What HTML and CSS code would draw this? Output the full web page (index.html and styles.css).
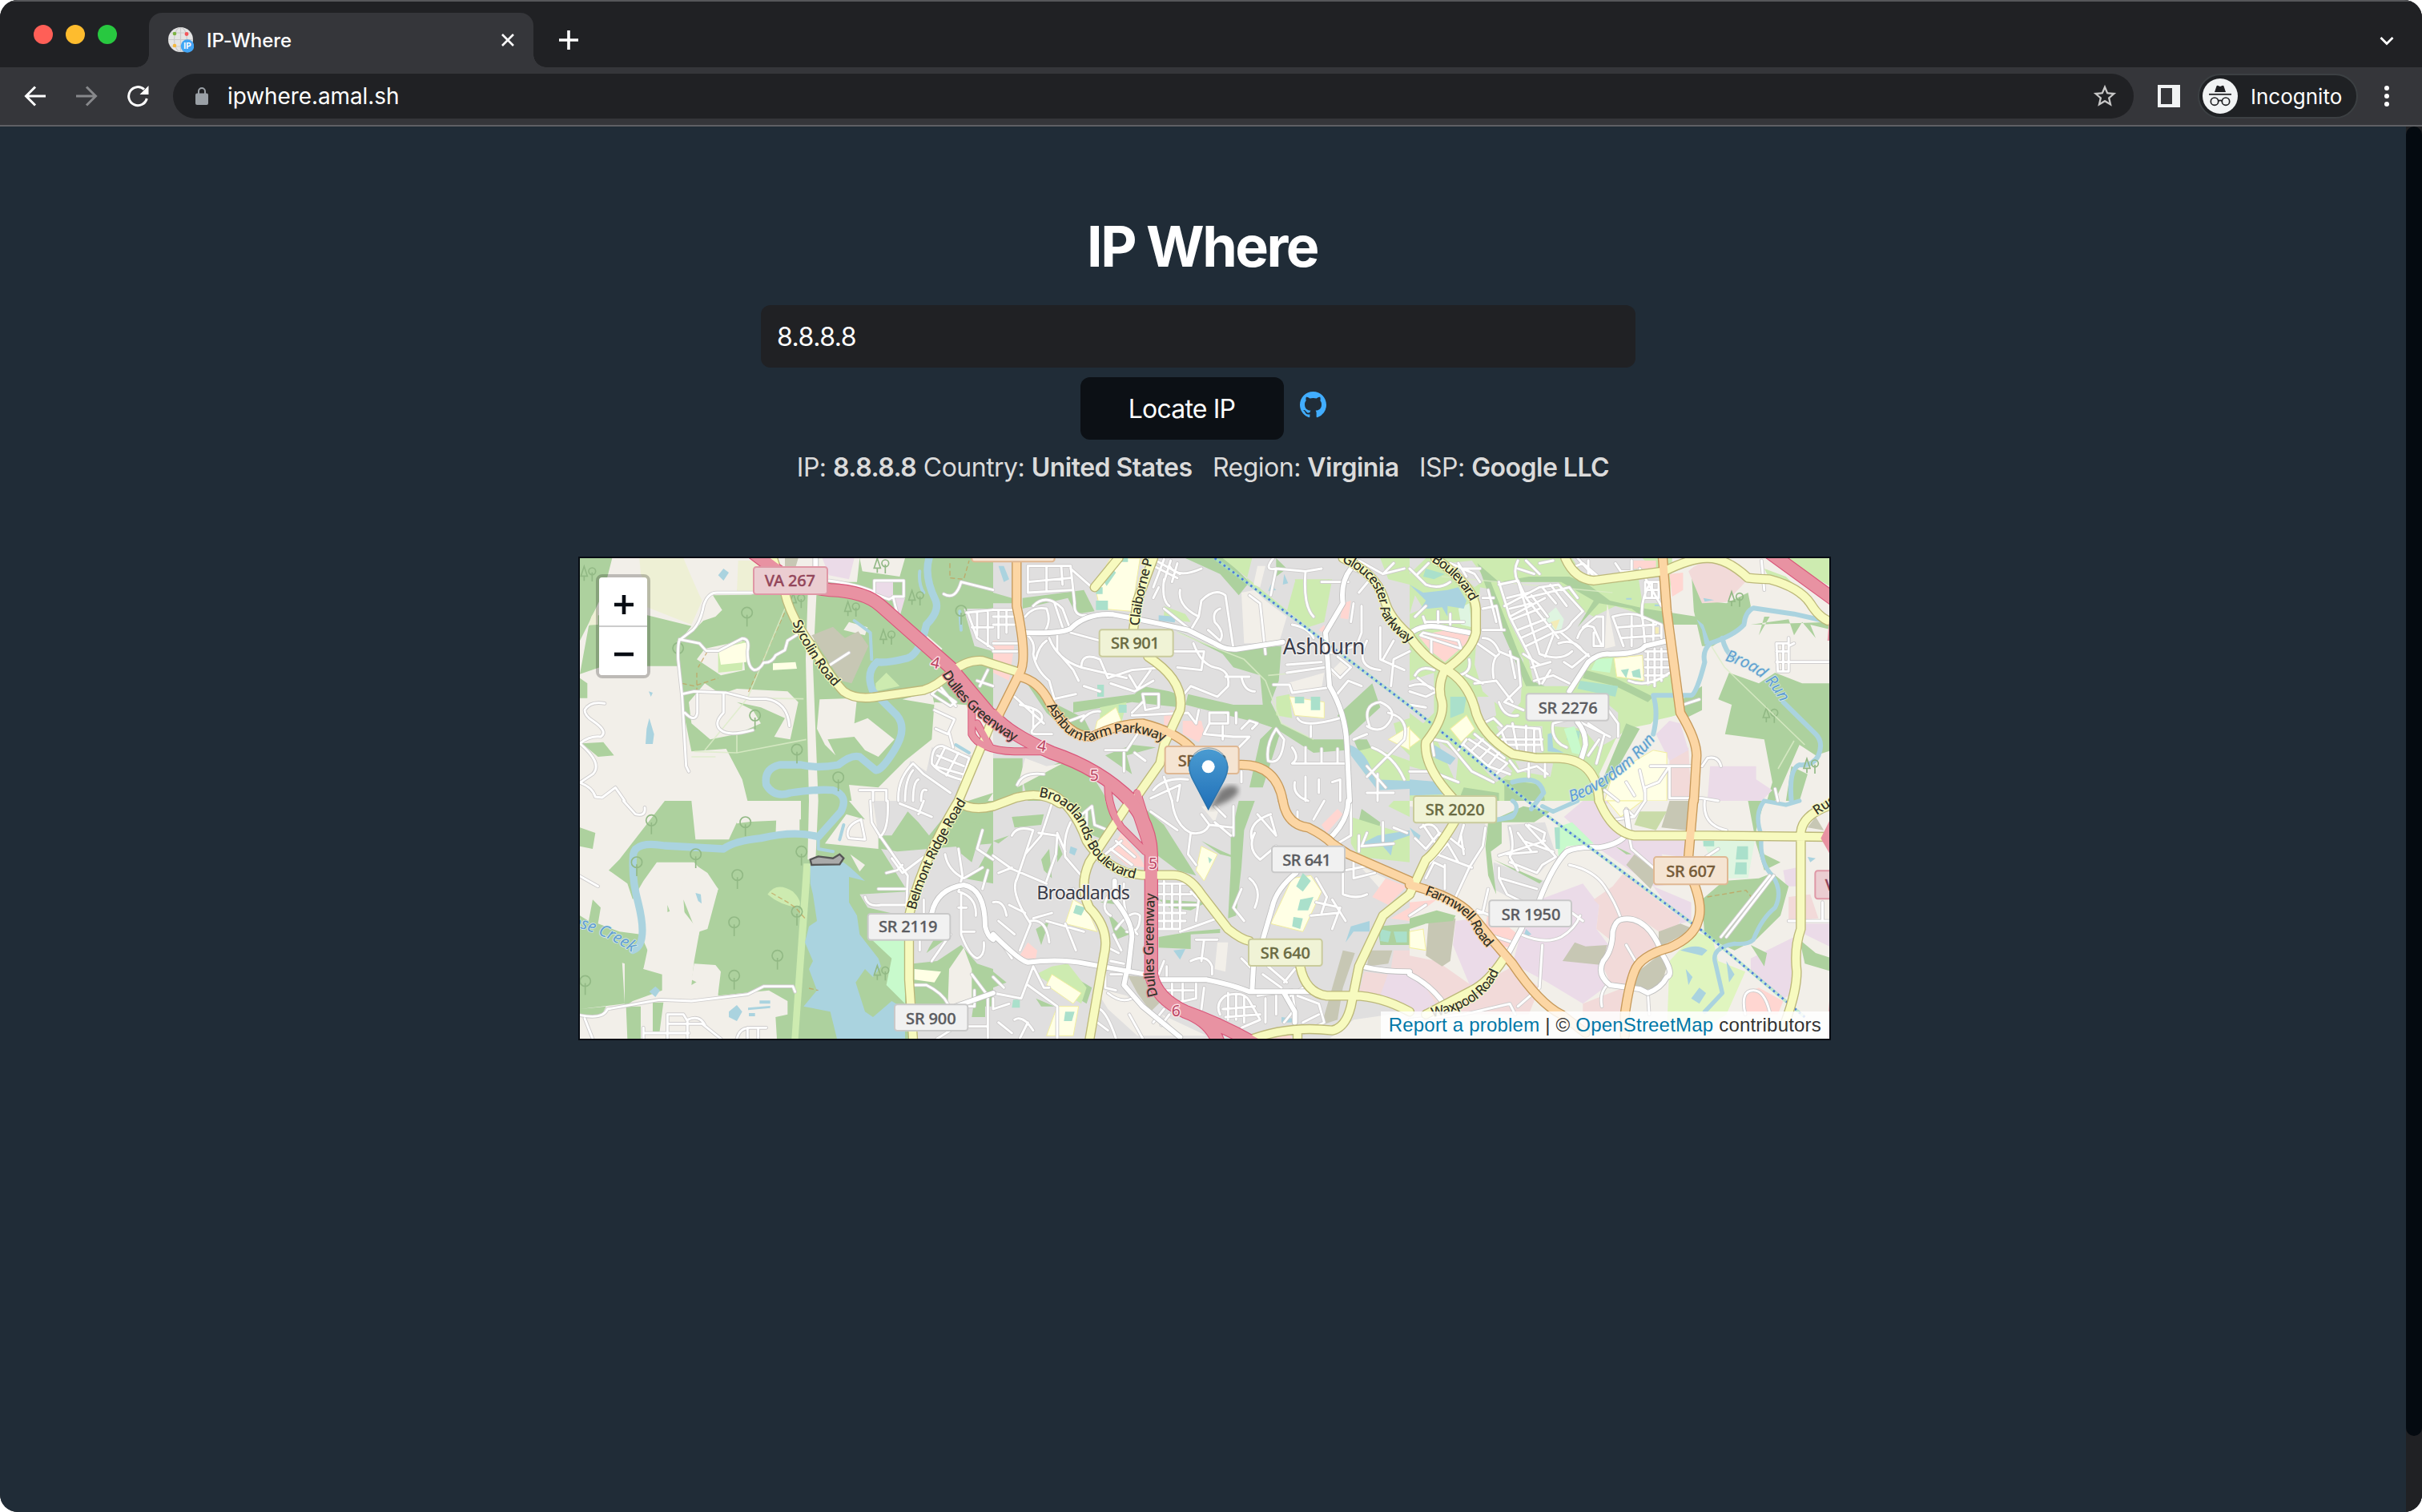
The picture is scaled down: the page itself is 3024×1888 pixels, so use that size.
FILE: index.html
```html
<!DOCTYPE html>
<html lang="en">
<head>
<meta charset="utf-8">
<title>IP-Where</title>
<link rel="stylesheet" href="styles.css">
</head>
<body>
<div class="window">
  <header class="tabstrip">
    <div class="lights"><i class="red"></i><i class="yellow"></i><i class="green"></i></div>
    <div class="tab">
      <svg class="favicon" viewBox="0 0 32 32"><circle cx="15.5" cy="15.5" r="15.5" fill="#e4e4e4"/><g fill="none" stroke="#c9c9c9" stroke-width="1.2"><path d="M15.500 0V31M0 15.500H31M3 7H28M3 24H28"/><ellipse cx="15.500" cy="15.500" rx="8" ry="15"/></g><circle cx="8" cy="8" r="2.300" fill="#7cb342"/><circle cx="23" cy="8.500" r="2.400" fill="#f4555a"/><circle cx="8" cy="23" r="2.300" fill="#f5b83d"/><circle cx="24" cy="23.500" r="8.300" fill="#42a5f5"/><text x="24" y="27" text-anchor="middle" class="favtext">IP</text></svg>
      <span class="tab-title">IP-Where</span>
      <svg class="close" viewBox="0 0 18 18"><path d="M2 2L16 16M16 2L2 16"/></svg>
    </div>
    <svg class="plus" viewBox="0 0 24 24"><path d="M12 0V24M0 12H24"/></svg>
    <svg class="chevron" viewBox="0 0 18 12"><path d="M1.500 2L9 9.500L16.500 2"/></svg>
  </header>
  <div class="toolbar">
    <svg class="nav" viewBox="0 0 28 28"><path d="M27 14H3M14 2.500L2.500 14L14 25.500"/></svg>
    <svg class="nav dim" viewBox="0 0 28 28"><path d="M1 14H25M14 2.500L25.500 14L14 25.500"/></svg>
    <svg class="nav" viewBox="0 0 28 28"><path d="M25.300 17A11.500 11.500 0 1 1 22 5.700"/><path class="solid" d="M27.500 1V12H16.500Z"/></svg>
    <div class="omnibox">
      <svg class="lock" viewBox="0 0 16 22"><rect y="7.500" width="16" height="14.500" rx="2" fill="#9aa0a6"/><path d="M4 8V5A4 4 0 0 1 12 5V8" fill="none" stroke="#9aa0a6" stroke-width="2"/></svg>
      <span class="url">ipwhere.amal.sh</span>
      <svg class="star" viewBox="0 0 24 24"><path d="M22 9.240l-7.190-.620L12 2 9.190 8.630 2 9.240l5.460 4.730L5.820 21 12 17.270 18.180 21l-1.630-7.030L22 9.240zM12 15.400l-3.760 2.270 1-4.280-3.320-2.880 4.380-.380L12 6.100l1.710 4.040 4.380.380-3.320 2.880 1 4.280L12 15.400z"/></svg>
    </div>
    <svg class="panel" viewBox="0 0 28 28"><path fill-rule="evenodd" d="M0 0H28V28H0ZM4 4V24H18V4Z"/></svg>
    <div class="incog">
      <svg viewBox="0 0 44 44"><circle cx="22" cy="22" r="22" fill="#f1f3f4"/><path d="M15 17L17.500 9.500Q18 8.500 19.500 9L22 10 24.500 9Q26 8.500 26.500 9.500L29 17Z" fill="#202124"/><path d="M8 19.800H36" stroke="#202124" stroke-width="1.800"/><g fill="none" stroke="#202124" stroke-width="1.700"><circle cx="15" cy="28.700" r="4.700"/><circle cx="29" cy="28.700" r="4.700"/><path d="M19.500 28.200Q22 26.700 24.500 28.200"/></g></svg>
      <span>Incognito</span>
    </div>
    <svg class="dots" viewBox="0 0 6 26"><circle cx="3" cy="3" r="3"/><circle cx="3" cy="13" r="3"/><circle cx="3" cy="23" r="3"/></svg>
  </div>
  <div class="viewport">
    <main>
      <h1>IP Where</h1>
      <div class="field">8.8.8.8</div>
      <div class="actions">
        <div class="btn">Locate IP</div>
        <svg class="github" viewBox="0 0 16 16"><path d="M8 0C3.580 0 0 3.580 0 8c0 3.540 2.290 6.530 5.470 7.590.4.070.55-.17.55-.38 0-.19-.01-.82-.01-1.490-2.010.37-2.530-.49-2.690-.94-.09-.23-.48-.94-.82-1.130-.28-.15-.68-.52-.01-.53.63-.01 1.080.58 1.230.82.72 1.210 1.870.87 2.330.66.07-.52.28-.87.51-1.070-1.780-.2-3.640-.89-3.640-3.950 0-.87.31-1.590.82-2.150-.08-.2-.36-1.020.08-2.120 0 0 .67-.21 2.200.82.640-.18 1.320-.27 2-.27s1.360.09 2 .27c1.530-1.040 2.200-.82 2.200-.82.440 1.100.160 1.920.080 2.120.510.560.820 1.270.820 2.150 0 3.070-1.870 3.750-3.650 3.950.290.250.540.730.540 1.480 0 1.070-.01 1.930-.01 2.200 0 .210.150.460.550.380A8.010 8.010 0 0 0 16 8c0-4.420-3.580-8-8-8z"/></svg>
      </div>
      <p class="info">IP: <b>8.8.8.8</b> Country: <b>United States</b> &nbsp; Region: <b>Virginia</b> &nbsp; ISP: <b>Google LLC</b></p>
      <div class="map">
        <svg class="canvas" viewBox="12 21 4680 1800" preserveAspectRatio="none">
          <defs>
            <g id="tree"><circle r="20"/><path d="M0 8V52"/></g>
            <g id="trees"><circle cx="16" cy="0" r="13"/><path d="M16 4V38M-14 -18L-26 18H-2ZM-14 18V36"/></g>
            <g id="minor">
              <!-- west, upper -->
              <path d="M665 150H525Q490 150 475 200 465 260 435 290L385 328Q378 345 380 400L395 540 410 800 420 820M385 325L460 340 485 368H530L620 322Q650 320 640 370 640 430 665 440 685 440 700 412 730 415 745 385L780 365 790 330 830 305M395 530L440 520 560 525 650 548H710Q790 560 797 650M452 530V600Q445 640 405 600M550 525V600Q510 640 540 665 570 690 660 665M105 565Q50 555 30 590 30 610 60 630 120 670 90 690 50 685 12 715M12 715Q100 790 60 830L12 862Q60 880 70 915L95 918 145 880 180 930M945 105Q1050 120 1110 145M1115 105H1225V165H1185L1200 225M1115 105V155L1170 175 1190 165M1375 155Q1420 180 1440 110L1560 140M950 420L1020 375"/>
              <path d="M1330 530L1400 575 1420 560 1350 510ZM1360 500L1420 575M1460 225L1560 215M1465 225L1500 320 1560 360M1480 280H1560M1500 225V310M1540 225V350M1500 480L1560 500M1540 440L1510 500M1340 590L1415 625 1390 680 1345 660M1395 675L1410 730M1330 790Q1330 720 1370 725L1470 770 1420 930M1330 790Q1360 830 1440 850M1380 730L1345 800M1430 750L1385 835M1350 760L1450 800M1340 800L1445 830M1205 930Q1200 850 1260 790L1300 830 1400 900M1230 930Q1230 850 1260 815M1260 930Q1260 860 1280 850M1290 930Q1290 880 1310 890M1060 890H1160V930M1110 890V930"/>
              <!-- west, lower -->
              <path d="M175 930L220 980Q260 990 255 955M12 1212L80 1250M12 1733Q100 1750 115 1710L310 1675 430 1680 640 1655 700 1625H810L818 1645M30 1745L60 1821M340 1821V1730H400L415 1755V1821M340 1765H470L540 1821M415 1750Q460 1730 480 1770M250 1800H420M250 1780V1821M600 1821Q610 1780 650 1780H710M640 1780V1821M680 1780V1821M1015 1060Q1010 1020 1065 1000L1080 1075 1020 1070ZM1100 930L1105 1010 1135 1060 1240 1210 1235 1330M1135 1065Q1170 1040 1165 930M1180 1145L1220 1200 1300 1140M1160 1200L1200 1190 1220 1170M1130 1260H1230M1080 1290Q1090 1330 1140 1320L1230 1320M1210 940L1260 960 1330 990M1280 980L1300 930M1380 1130Q1390 1190 1450 1220L1520 1180M1430 1110L1445 1210 1430 1270Q1500 1290 1495 1360M1520 1040L1500 1110 1560 1150M1540 1190L1520 1260M1440 1280V1430Q1470 1510 1500 1520 1530 1510 1525 1460M1430 1330H1460M1440 1420H1490M1285 1450V1490M1330 1530L1400 1430M1300 1300V1350M1265 1620H1310Q1370 1650 1390 1690M1480 1580L1540 1660V1821M1490 1640V1700L1420 1700M1470 1775H1540M1350 1821L1400 1790"/>
              <!-- centre, upper -->
              <g transform="translate(1560 0)"><path d="M130 50H290L305 190Q300 240 350 235M130 50V150M200 50V140M255 50L260 120M130 110L290 95M130 150L300 140M290 60L370 130M0 215H70M0 240H75M0 270H80M20 215V320M50 215V300M0 340H100M0 370H90M120 240Q150 200 200 210 220 260 190 300M150 200Q200 150 260 210L290 290M230 190L260 280M130 310Q160 340 150 380 160 440 210 480L230 550M210 320Q240 400 330 430L500 470M200 330Q170 350 160 400M290 300L400 330M240 300V370L300 440 320 480M330 430Q330 370 400 400L430 470 520 440 640 430M340 500L400 520M510 460L540 510 590 440M440 490L530 520 600 480M640 430Q600 410 610 400M680 370L790 370 780 440 690 430M750 340Q780 420 830 430 890 440 880 500L840 540 740 500 715 530M870 465H960M930 465Q940 520 980 520M660 50Q690 100 780 60M580 40L690 95M610 30L700 80M640 25L600 130M665 30L640 110M690 40L670 110M620 130L600 170M640 100Q630 180 660 200M700 140Q690 200 770 240L740 290 640 210M780 180Q830 130 870 160L900 360M780 180L770 240M805 290L850 330Q870 300 830 260 820 220 850 210M960 160L1000 190 1020 380M1120 270Q1180 280 1200 320M1050 20Q1010 70 1060 60L1170 70 1230 60M1060 60L1040 160M1170 70Q1160 200 1200 240M1230 110H1330M1340 60L1420 90 1370 150M1370 30L1460 80 1540 60M1460 80L1500 40M1350 190L1340 260M1380 200V300L1360 350 1250 380M1450 280V400L1540 440M1400 330Q1350 430 1450 440M1500 330L1460 400M1560 370L1500 400 1490 500M1100 450L1240 430M1100 420L1230 410M1050 495H1110L1120 525 1260 505M1290 390L1340 430 1300 470 1260 430M1280 540L1330 480 1380 500M1410 650Q1380 570 1450 560 1520 590 1480 640 1450 680 1400 650M1480 600Q1560 620 1540 700L1400 840M1140 620Q1160 660 1300 620M1190 650V690M1400 680L1350 700M1420 730Q1500 760 1540 850M1400 800L1470 880M1120 730Q1150 770 1120 790H1320M1170 730V790M1230 735V790M1290 735V790M1060 660Q1020 720 1030 780 1080 800 1090 700ZM810 600H880V640H810ZM910 600V640M930 660L960 630 990 640 970 660M810 640L790 680 900 690 960 690 910 740M860 650V700M560 530H620V580L570 590ZM520 600L560 560M520 610L730 600 760 640M770 590L760 640M420 740H500L540 680M490 750V820M530 750L570 780M100 570Q200 590 180 630 120 680 160 680L220 680M80 540L190 640M150 590V660M220 550L310 530M330 630Q360 590 400 595M260 640L340 610M90 870Q110 820 190 830M600 890Q640 840 730 850M640 840L670 930M590 920L700 870 690 930M930 820V860M1130 860Q1120 910 1180 930M1170 840V930M1220 850V900M1270 860L1300 850V930M1440 830V930M1400 900L1500 900"/></g>
              <!-- centre, lower -->
              <g transform="translate(1560 930)"><path d="M0 205L70 255 200 310M150 110L120 200 90 290Q60 340 140 460L100 560M150 110Q90 90 70 130M220 10L180 130 120 200M170 120L240 130 235 200 200 300M240 120L270 190M20 270L70 250M0 380Q40 370 50 430M60 390L120 420M140 450Q200 440 210 530M270 460L310 560M200 450L340 490M80 500L20 450M30 530L70 590M150 440L220 420M290 80Q260 140 270 210L330 280M300 330L260 340M310 70L370 20 380 90 430 110M350 120V40M670 0Q680 90 740 120 790 130 810 90L780 50M590 40L690 110M830 80L890 130M810 90L900 100M740 120L730 200 760 240M640 300V480M670 310V480M700 310V480M620 310H730M620 350H740M620 390H760M620 420H720M620 450H720M620 480H700M740 340L770 370 760 450M700 490L840 440M460 150L530 210M440 180L520 240M480 150L420 200M490 310Q480 430 540 500M450 330Q390 400 440 430M460 480Q520 400 550 430 550 500 500 490M970 150Q950 80 1040 50M980 120Q950 180 1000 220L1060 170M990 50L1060 130 1040 60M1140 40V100M1240 0L1200 70M1340 0V130L1290 160M1370 130V190M1400 120L1380 170 1500 160M1460 80V150M1550 120L1500 100M900 20V130M830 20L870 60M930 330L900 400 940 450M960 290Q1010 330 980 400M1310 270V350Q1360 370 1400 350M1320 260L1420 240M1350 220V290L1430 270M1210 290L1250 360 1230 420M1210 380L1300 400 1270 480M1190 430L1290 420M1270 370L1320 450M760 520H840M790 520L780 600M740 600Q800 570 820 620V650M640 600L620 650M650 620V670M670 670V760L760 740V680M710 680V750M650 710H750M780 780L790 700M850 800Q830 760 870 730 940 710 960 750L1000 820 930 850M880 720V820M910 730V820M940 730V830M860 780L980 770M870 810L1000 800M990 730L1120 710 1130 780 1090 830M1020 740V830M1060 720V800M1100 740L1160 700M1140 730L1220 760 1240 830 1160 870M1160 830L1220 800M1010 650L1080 700M1030 620L1100 680M1130 630L1090 680M930 590L970 630M0 660L40 700M0 720L105 740 150 620M150 620L190 700 210 700M130 690L240 770V890M0 740V780L60 760M420 640V700L460 710M490 690L530 730M440 650H490M440 600L490 610M430 720Q480 760 520 740M450 500L480 560M430 550L470 570M20 830L70 870M80 820Q110 800 150 860M100 890L130 830M400 780Q430 800 460 890M390 830L430 860M510 800L560 890M600 830L640 780M630 840L660 800"/></g>
              <!-- east, upper -->
              <g transform="translate(3120 0) scale(1.014 1)"><path d="M330 110L370 240 450 400 480 490M330 120L400 105 480 380M370 240L500 170M350 200L480 130 550 120 640 220M400 105L430 170 550 320M430 170L590 130 620 170M450 160L510 240M490 130L540 190M520 120L580 200M360 170L440 150M370 210L450 190M380 250L480 210M400 290L500 250M410 320L520 270M430 350L530 300Q580 300 600 260L640 220M500 390L530 310M480 380Q560 410 600 370M420 380L480 420M550 340Q610 320 640 370M570 410L600 430 660 380M560 300L670 395M450 430L520 410M460 480L530 460 590 490M490 490L520 440M620 320Q640 260 680 280L710 350M690 240H715V350H680V300M640 280L690 240M750 240Q820 220 860 240L930 270V320M750 240L790 350M770 280L910 270M780 320L930 310M820 240V350M860 240L870 350M900 260V330M860 250Q850 180 890 110M870 110H920V170H870ZM895 110V170M870 140H920M850 60L930 200M760 40L780 70H840M820 30V80M870 370L960 370M870 400H960M870 430H960M870 460L950 460M880 370V490M905 360V500M930 360V480M810 480Q880 510 960 450M400 30Q380 70 400 110M400 60L460 80M430 30L480 80M480 40L530 30M590 60L640 40 720 110M620 20L690 100M660 30V110M270 210L320 200 340 290 270 290M290 140L320 260M270 170H310M310 290H350M270 320Q310 320 330 370L400 400 410 500 350 560 420 590M330 380Q300 400 310 470M370 370L390 470M240 490L320 480 380 560M330 560Q350 620 400 610M220 400Q230 450 180 460M210 460L270 490M250 340L320 390M0 60L60 120Q110 140 150 110M30 80L70 40M90 30L140 60M150 40L240 80 260 110M180 40L210 90M200 60L260 60M20 240L60 200M50 240L60 270M105 220V270M150 230V270M60 260H200M40 310L190 360 180 330 50 300ZM80 330V380M20 460Q40 420 90 440M30 470L80 510M0 520L60 540 100 520M0 570L60 580M0 500Q60 480 100 520M270 640L310 620 340 650M310 700L360 650 480 660 490 740M340 670L370 750M380 640L400 750M430 650V750M460 660V750M340 700H490M320 720H480M200 720L290 800 370 830M220 700L360 790M240 680L350 770M210 700L180 740M230 740L270 700M260 770L300 730M290 800L330 750M320 830L360 790M90 700L140 710 230 820 310 860M0 820H80L180 860M80 700L90 760M370 780L400 820 470 800 510 830M440 790V840M500 790V840M530 640Q520 690 560 720L580 730M530 640L600 620 740 690M720 570L770 640V690M700 700L660 760M660 640L720 680 690 790M960 800H1080L1100 770Q1140 760 1150 800M960 800V920H1080L1140 930M870 930V880L920 860 960 800M850 815L870 900M890 800L960 800M720 890L770 930M800 860L830 910M1355 340H1400V445H1360ZM1355 370H1400M1355 410H1560M1380 340V445M1400 320V350L1420 340M1300 30L1310 140M1350 885L1360 930M1010 570L1070 550"/></g>
              <!-- east, lower -->
              <g transform="translate(3120 930) scale(1.014 1)"><path d="M20 140L60 180 110 120 150 140 200 180M50 90L110 180M60 250L140 160 180 230M40 100Q100 60 120 160M60 290L90 230 130 250M130 240V330M100 200L230 250M190 130L200 200M280 100L270 170 220 250 170 360M200 90L180 160M370 100Q390 170 370 210L400 260M360 200L470 190M330 205L500 150M430 90L540 210 490 240 470 270 370 230M400 120L450 190M440 90L500 120 490 160M420 150L530 190M330 250V290L360 350 420 380M335 290L470 330M290 330L270 420 230 420M0 430L60 390M250 410L300 430M590 240Q680 260 720 320 760 380 780 440M800 540L840 610M290 500L380 530M410 500Q500 540 560 510 610 480 630 430M600 420L640 450M490 540L480 700 400 770M0 820L200 800 370 760 390 800M730 690Q700 720 710 770M880 720L885 800M1090 0Q1080 90 1170 110M810 130L820 180 900 250M800 30L830 60 870 0M760 70L830 60M1095 210L1140 180M1240 800Q1220 710 1270 710 1310 710 1330 790M1400 450H1560M1525 380V450M1150 510L1330 280M1170 510L1345 280"/></g>
            </g>
            <g id="tert">
              <path d="M1330 1350Q1350 1260 1450 1245 1530 1260 1530 1400 1540 1440 1560 1450M1420 1700L1560 1650M895 21V100"/>
              <g transform="translate(1560 0)"><path d="M120 300Q250 305 290 285 350 225 450 232 600 260 730 290L830 340Q870 365 910 362L1085 335M1340 60Q1300 110 1310 190L1245 300 1260 500Q1320 600 1325 720L1335 930"/></g>
              <g transform="translate(1560 930)"><path d="M0 500Q100 600 130 605 250 590 350 610L570 650M620 670H800Q900 690 960 715H1200M500 640L490 690 560 770 700 885M455 300V370Q520 450 520 510L505 640M1330 0Q1330 80 1250 150M1135 270Q1060 330 1045 400L1010 520 975 620 970 710M1090 720 1130 790V830M1380 620Q1460 640 1560 640"/></g>
              <g transform="translate(3120 0) scale(1.014 1)"><path d="M0 305Q50 260 140 285L220 300M590 520L660 410Q700 375 740 380 850 380 870 350L955 330M620 635Q650 670 650 720L635 770"/></g>
              <g transform="translate(3120 930) scale(1.014 1)"><path d="M480 370Q530 240 580 190 620 170 700 175 790 160 810 110L800 40M415 475L355 590M0 650Q80 690 130 765M780 445Q840 430 890 490 920 530 930 570 980 650 950 660 930 700 880 720L850 705 740 690Q690 650 715 600 750 560 750 490 760 450 780 445"/></g>
            </g>
            <g id="sec">
              <path d="M735 21L780 150Q800 240 880 350 960 480 1000 520 1040 550 1110 542L1300 515Q1350 500 1400 450 1460 400 1520 405L1660 450M1560 620L1430 930M1430 930Q1290 1160 1245 1360V1600L1260 1821M1430 935Q1480 970 1560 950L1640 920Q1740 890 1810 940"/>
              <g transform="translate(1560 0)"><path d="M600 21L540 180 525 290M580 390Q720 480 700 590L640 720 625 790 520 940M1310 21Q1440 80 1470 190 1490 250 1560 310M470 20L380 130"/></g>
              <g transform="translate(1560 930)"><path d="M210 -30Q300 10 350 150 400 230 500 270L560 278H670Q730 275 780 350L880 480Q930 520 960 525M520 -10L360 230Q320 320 360 400 440 480 415 580L360 900M1150 620Q1170 720 1250 730H1350Q1450 730 1560 790M1560 350L1460 430 1370 620 1340 770Q1320 850 1270 860 1100 840 950 900M1140 860V890"/></g>
              <g transform="translate(3120 0) scale(1.014 1)"><path d="M95 21Q240 130 245 210V300Q230 370 130 440 100 500 120 560 130 620 60 710 50 800 160 920M0 315Q60 400 130 435 210 480 240 580 260 680 380 755L470 770H540Q690 770 700 930M575 21Q610 100 680 105L940 70Q1040 20 1100 21 1170 20 1250 95 1300 100 1330 100 1440 130 1480 190 1510 240 1545 255"/></g>
              <g transform="translate(3120 930) scale(1.014 1)"><path d="M165 80Q100 190 60 220L0 350M700 0Q750 120 830 130H1100L1550 135M1560 15Q1450 50 1445 120V480Q1420 550 1430 640 1430 720 1380 850M345 595Q290 680 230 710L60 800"/></g>
            </g>
            <g id="prim">
              <g transform="translate(1560 0)"><path d="M88 21V200Q130 400 100 450L5 640M100 465Q170 480 210 560 280 690 370 690 470 640 560 640 680 670 740 730M920 795Q1060 790 1085 930"/></g>
              <g transform="translate(1560 930)"><path d="M1085 0Q1100 90 1180 100 1240 130 1270 160L1330 200 1560 300"/></g>
              <g transform="translate(3120 0) scale(1.014 1)"><path d="M935 21L950 220 1000 600Q1060 700 1060 760L1050 930"/></g>
              <g transform="translate(3120 930) scale(1.014 1)"><path d="M1048 0L1030 210V260Q1090 390 1065 450 1050 510 960 550 850 580 830 640 810 690 795 800V880M0 315Q180 360 240 440 310 530 380 610 480 760 560 800L650 870"/></g>
            </g>
            <g id="mot">
              <path d="M660 0L740 60Q830 130 950 140 1080 145 1140 200L1400 430Q1500 550 1560 620"/>
              <g transform="translate(1560 0)"><path d="M0 610Q60 680 220 750 400 810 520 930"/></g>
              <g transform="translate(1560 930)"><path d="M460 -50Q590 60 592 200V650Q610 740 720 790 830 830 850 930M720 790Q860 840 980 910"/></g>
              <g transform="translate(3120 0) scale(1.014 1)"><path d="M1330 0L1580 185"/></g>
            </g>
            <g id="ramps"><path d="M1480 560V680Q1510 740 1640 745H1760M1500 640L1550 730M1990 870Q1990 960 2040 1030L2130 1120M2080 930L2150 1140M2100 900L2150 1060"/></g>
            <path id="p-syc" d="M808 262Q870 400 960 500"/>
            <path id="p-dul" d="M1368 455Q1450 600 1650 715"/>
            <path id="p-dul2" d="M2178 1660Q2150 1600 2168 1240"/>
            <path id="p-ash" d="M1760 575Q1840 720 1930 705 2080 640 2205 715"/>
            <path id="p-clai" d="M2108 275Q2110 200 2160 21"/>
            <path id="p-glo" d="M2865 35Q3010 100 3010 220 3040 290 3120 340"/>
            <path id="p-boul" d="M3200 32Q3310 100 3350 190"/>
            <path id="p-brd" d="M1730 915Q1850 930 1895 1050 1940 1190 2090 1222"/>
            <path id="p-bel" d="M1270 1340Q1312 1170 1462 930"/>
            <path id="p-farm" d="M3175 1280Q3310 1330 3350 1390 3370 1440 3420 1490"/>
            <path id="p-wax" d="M3205 1740Q3410 1700 3460 1555"/>
            <path id="p-beav" d="M3725 935Q3920 860 4045 695"/>
            <path id="p-broad" d="M4300 405Q4450 440 4515 570"/>
            <path id="p-goose" d="M-20 1398Q110 1430 215 1503"/>
            <path id="p-rus" d="M4645 985L4720 935"/>
            <linearGradient id="pin" x1="0" y1="0" x2="0" y2="1"><stop offset="0" stop-color="#4a9bd1"/><stop offset="1" stop-color="#1f6fb8"/></linearGradient>
            <filter id="soft"><feGaussianBlur stdDeviation="9"/></filter>
          </defs>
          <rect x="0" y="0" width="4720" height="1860" fill="#f2efe9"/>
          <!-- woodland and parks -->
          <g class="wood">
            <path d="M12 21H133L100 150 45 265 12 330ZM45 275L80 235H265L430 275 375 345 380 425H100L12 455ZM12 470L40 490V545H12ZM20 715L100 710 140 760 80 765ZM12 160L30 170V200H12Z"/>
            <path d="M510 160L660 158 600 140 640 115 700 150 770 60 H900L940 110 1050 110 1060 21H1560V930H640L620 850 560 735 430 745 405 620 395 545 380 340 440 290 475 255 520 240 545 215Z"/>
            <path d="M330 930H430L445 1075H570L600 1010 840 1000V930H1560V1821H750L745 1740 790 1730V1680L720 1640 530 1660V1560L430 1620 440 1530 460 1420 490 1410 530 1260 440 1160 300 1160 250 1230 210 1300 190 1240 120 1190 160 1150ZM12 1030L70 1050 60 1110 12 1100ZM45 1380L60 1300 90 1330 80 1390 160 1420 240 1430 270 1500 250 1560 320 1580V1640L210 1680 180 1700V1540L12 1480V1360ZM12 1480L170 1530 180 1690 12 1710ZM12 1710L110 1700 90 1740 12 1735ZM185 1700H240V1821H190ZM285 1685H325L310 1800H285ZM340 1320L380 1430 340 1460ZM400 1300L440 1400 410 1430Z"/>
          </g>
          <g fill="#f2efe9">
            <path d="M870 21H905L885 420 905 930H870L858 400ZM1060 21H1230L1210 90 1070 70ZM910 550L1050 545 1040 640 1090 620 1190 700 1130 765 1080 740 1040 690 940 700 970 760 930 720 900 660ZM480 490L540 530 600 510 790 520 830 560 800 700 740 690 780 620 690 580 600 560 660 590 690 640 600 680 500 700 430 640 420 560ZM430 760L560 740 600 820 560 930H430ZM770 21H860L850 50 760 60ZM1340 560L1560 580V930H1030L1020 870 1130 880 1230 780 1330 700ZM450 400L480 360 620 330 630 440 540 460ZM1020 260L1090 280 1080 310 1000 290ZM1300 300L1370 360 1350 380ZM1220 550L1330 520 1340 570ZM1080 1000L1010 980 930 1090 1130 1110V930H1020ZM750 935H835V1065H745ZM600 930H720L710 1000 600 1015ZM330 1350L280 1420 250 1560 420 1570 460 1420 390 1330ZM430 1160L490 1200 530 1260 480 1410 420 1330 390 1260ZM270 1220L330 1210 340 1240 270 1250ZM1025 1130L1080 1170 1060 1195ZM1395 1560L1450 1480 1480 1560V1700H1390ZM440 1540L520 1545 540 1570 530 1650 430 1600ZM870 930H905L895 1150H865Z"/>
          </g>
          <path d="M235 21H400Q450 140 470 180L430 270 265 205V130L240 80ZM55 240L80 200V270L45 272ZM605 30H720L690 150H600Z" fill="#eef0d5"/>
          <path d="M850 1165H878L830 1821H805Z" fill="#cdebb0"/>
          <path d="M715 1280Q750 1230 810 1270 850 1310 830 1330 760 1320 715 1280M1120 490L1160 450 1210 500 1120 520ZM530 360L630 330 620 440 530 450Z" fill="#cdebb0"/>
          <path d="M530 360L640 335 635 410 540 420ZM735 415L820 410 825 435 735 440ZM1265 1560L1365 1570 1340 1610 1265 1600Z" fill="#ffffe5"/>
          <path d="M880 310L960 278 1005 320 1055 295 1093 350 1030 490 990 480ZM780 21H830L820 55H780ZM1320 1120H1385L1360 1290 1290 1280Z" fill="#c7c7b4"/>
          <path d="M920 21H1040L1020 100 945 85ZM1115 110H1185V175H1120ZM1185 170H1230L1210 240Z" fill="#ebdbe8"/>
          <path d="M1105 1450H1230V1690L1160 1620 1180 1520Z" fill="#c8facc"/>
          <g class="resi"><path d="M1140 1110L1200 1120 1560 1090V1560L1500 1540 1440 1470 1350 1530 1260 1540V1370L1090 1330 1060 1280 1240 1270ZM1450 210H1560V370L1490 350ZM1330 730L1480 760 1430 930H1200L1250 780 1310 820ZM1260 1700H1560V1821H1260ZM1110 930H1420L1400 960 1320 1060 1280 1010 1240 970 1180 1060 1130 1060Z"/></g>
          <g class="wood"><path d="M1390 1030L1440 1000 1520 1020 1480 1160 1430 1120ZM1560 1080L1500 1190 1450 1220 1560 1240ZM1490 1670H1530V1740H1480ZM1540 930L1450 935 1560 900ZM1320 1480L1350 1430 1380 1450 1310 1500Z"/></g>
          <!-- centre land cover -->
          <g transform="translate(1560 0)">
            <path class="resi-fill" d="M0 21H1560V930H0Z"/>
            <path class="wood-fill" d="M0 150L70 170V190H0ZM110 170L340 140 380 220 310 230 280 170 110 210ZM680 290L850 365 1080 350 1070 480 1040 560 1080 640 1200 700 1330 700 1320 740 1200 750 1060 660 1000 640 720 570 730 530 900 570 1010 570 1000 460 900 430 860 380ZM300 560L530 530 560 500 660 520 720 540 700 580 520 560 300 600ZM720 21H870L960 110 920 160 850 80ZM1000 700L1050 650 1080 660 1010 880H960ZM0 770H110V930H0ZM110 850L260 780 380 850 430 930H130ZM120 480L200 550 340 620 380 700 300 690 200 600ZM1280 700L1400 700 1440 780 1400 820 1350 700ZM1060 21L1100 60 1060 90ZM1290 610L1420 490 1450 580 1330 690ZM420 760L520 720 610 730 500 760 520 830Z"/>
            <path class="park-fill" d="M860 21H970L950 100 1020 170 1100 220 1130 110 1270 100 1240 260 1180 280ZM1130 100H1260L1240 180 1140 170ZM1340 750L1420 730 1560 780V860H1450L1400 840ZM400 580L500 560 480 640 400 680ZM1060 540L1110 530 1120 620 1060 610ZM640 200L720 230 740 260 640 250ZM1450 21H1560V120L1480 100ZM1500 640L1560 620V760L1520 720Z"/>
            <path fill="#f2efe9" d="M930 150L980 140 1020 180 1100 240 1070 340 940 340ZM990 50L1020 50 1000 130 975 120ZM1100 490L1240 450 1230 510 1110 525ZM1260 450L1310 400 1330 430 1290 470ZM120 770L200 800 260 790 90 880Z"/>
            <path class="school" d="M440 21H550L520 220 400 210 380 120ZM390 630L460 580 480 630 380 670ZM1110 540L1240 560V620L1130 610ZM1480 700L1560 650V740Z"/>
            <path class="pitch" d="M460 21H505V35H460ZM410 100L440 55 460 75 425 125ZM385 180H430V215H385ZM390 495H415V540H390ZM1190 540H1225V590H1190ZM1130 540H1165V565H1130ZM470 570H500V600H470ZM385 130H410V155H385Z"/>
            <path fill="#ffd6d1" d="M0 330L80 340 60 480 0 450ZM710 630H780L790 670 770 710 710 680ZM640 610L670 590 690 630 640 650ZM1310 190L1340 180 1330 250 1300 245ZM1220 290L1240 270 1250 310Z"/>
            <path class="water-fill" d="M620 235L685 240 680 262 620 255ZM1335 720Q1400 740 1430 850L1560 855V885L1440 890 1340 760ZM1040 120L1060 140 1030 145ZM1090 80L1105 115 1085 120ZM20 50H40L60 100 40 110Z"/>
          </g>
          <g transform="translate(1560 930)">
            <path class="resi-fill" d="M0 0H1560V890H0Z"/>
            <path fill="#f2efe9" d="M380 700L500 730 700 880H540L430 780ZM1350 820L1560 790V890H1260ZM780 20L850 20 830 80ZM840 530L880 530 870 640 830 630ZM1370 240L1470 290 1450 330ZM340 20L420 60 380 120 330 80ZM630 800L800 880H700Z"/>
            <path class="wood-fill" d="M70 60L190 50 180 90 80 100ZM270 0H420L460 110 400 140 350 120 320 60ZM570 30L640 90 760 280 690 260 610 200ZM920 0H980L940 110 930 250 910 430 880 440 890 250 890 130ZM620 510L740 490 850 480V495L740 500V555L620 550ZM620 370L800 380 740 410 660 400ZM0 150L60 130 20 160ZM180 220L210 180 220 290 190 260ZM240 150L260 200 240 230ZM160 480L210 450 180 540ZM430 420L510 500 460 520ZM270 640L370 700 350 760 300 730 200 660ZM160 740L230 770H180ZM0 640L50 680 0 700ZM1380 30L1450 80 1440 150 1360 120ZM1440 470L1560 460V540L1450 540ZM780 150L860 190 930 220 850 200ZM400 380L440 370 480 390Z"/>
            <path class="park-fill" d="M1340 60L1560 130V230L1370 210 1340 160ZM220 620L280 610 350 700 330 760 160 650ZM1500 0H1560V60L1480 20Z"/>
            <path class="school" d="M780 170L840 200 790 300 760 260ZM1120 290L1190 280 1230 340 1160 490 1040 460ZM300 370L350 400 390 490 270 460ZM220 650L330 720 300 760 200 690ZM240 770H320L300 880H200Z"/>
            <path class="pitch" d="M1160 270L1190 300 1160 340 1135 320ZM1150 370L1200 360 1180 410H1140ZM1125 435L1160 440 1150 480 1120 470ZM310 390L345 400 330 430 300 420ZM270 790H305L295 825H265ZM1450 480L1490 490 1480 530 1450 525ZM1500 490H1550V530H1510ZM75 745H100V775H70ZM805 210L820 220 810 235Z"/>
            <path fill="#ffd6d1" d="M440 190L480 120 550 210 570 250 500 240ZM1230 90L1290 30 1310 50 1250 120ZM1420 360L1470 290 1550 320 1480 390ZM1490 440L1560 400V450ZM100 580L130 530 165 560 160 590 110 590ZM1040 880L1110 870 1120 890H1030Z"/>
            <path fill="#c7c7b4" d="M505 655L570 660 630 750 590 790 540 720ZM1310 560L1355 570 1310 700 1290 820 1230 840ZM1410 560H1495L1480 610 1400 620Z"/>
            <path fill="#f2dad9" d="M1390 640L1480 650 1450 730 1370 720ZM1500 560H1560V630H1490Z"/><path fill="#ebdbe8" d="M1480 645H1560V780L1450 730Z"/>
            <path class="water-fill" d="M1360 170L1440 130 1560 110V130L1500 150 1490 205 1460 170ZM1340 470L1410 450V490L1350 490 1320 530ZM675 560L720 555 700 595ZM290 170L315 180 305 205 285 195ZM1080 810L1120 815V830H1080Z"/>
          </g>
          <!-- east land cover -->
          <g transform="translate(3120 0) scale(1.014 1)">
            <path class="park-fill" d="M0 21H1030V600L900 630 800 760 700 930H0Z"/>
            <path class="resi-fill" d="M330 110L550 110 640 220 680 240 760 200 940 260 970 450 880 500 750 380 660 400 590 500 460 500 440 400 370 260ZM600 21H860L920 80 930 190 860 190 840 60 650 100ZM0 21H60L0 80ZM140 40L230 30 280 100 240 130ZM0 480L90 450 90 600 50 640 0 600ZM260 130L310 140 340 290 420 400 410 560 370 610 270 520 240 420ZM250 540L310 540 320 610 260 640ZM320 650L490 650V750L370 740ZM190 720L260 690 380 820 320 860ZM520 650L600 620 700 540 770 600 770 690 700 730 640 660ZM0 800L100 830 180 930 0 860ZM390 780L530 790 520 840 410 820ZM20 160L50 210 0 230ZM100 700L180 760 170 860Z"/>
            <path fill="#f2efe9" d="M970 21H1560V930H740L700 830 760 700 800 660 900 640 1010 600 960 200ZM730 190L760 350 720 360Z"/>
            <path class="wood-fill" d="M250 40L330 110 440 90 590 90 660 120 740 180 870 210 1060 240 1080 270 900 270 820 210 700 190 620 280 680 180 560 110 300 110 400 370 450 480 500 500 430 500 340 290ZM1040 60L1080 180 1170 190 1250 150 1260 200 1240 270 1120 350 1080 350 1050 220ZM1180 450L1290 490 1350 450 1450 490 1560 490V740L1500 760 1440 720 1350 930H1320L1340 860 1310 700 1165 680 1190 570 1140 550ZM1260 270L1560 260V290L1480 270 1500 320 1450 260 1420 310 1400 250ZM1330 240L1290 310 1310 240ZM990 560L1080 500V590L1020 620ZM650 440L760 470 900 540 880 560 760 500 640 470ZM800 640L850 660 700 930H680ZM350 850L490 870 500 930H350ZM200 880L330 900V930H180ZM1410 800L1470 830 1440 930H1390ZM1110 250L1150 330 1120 340Z"/>
            <path class="park-fill" d="M1370 21H1560V130ZM1310 60L1390 90 1440 140 1330 100Z"/>
            <path fill="#f2dad9" d="M1030 70Q1090 10 1170 50L1240 110 1170 185 1080 190ZM960 780L1030 730 1040 920H960Z"/>
            <path fill="#ffd6d1" d="M960 80L1010 75 1010 140 970 165ZM30 310L140 290 220 310 210 340 130 410 80 370ZM820 30H910V60H820Z"/>
            <path fill="#ebdbe8" d="M910 680L960 630 1000 640 1030 740 960 780ZM1110 800H1280V850L1340 890 1300 930H1100Z"/>
            <path class="school" d="M755 395L860 385 865 480 765 465ZM150 660L210 610 240 660 190 710ZM750 830L900 740 950 750 950 930H720ZM0 660L40 700 0 730Z"/>
            <path class="pitch" d="M780 440L810 435 800 470ZM820 445L850 435 855 470 825 465ZM630 480L770 500 760 540 620 510ZM590 660L630 670 620 730 580 700ZM60 60L130 80 90 100 50 90ZM150 540L210 540 200 600 150 620Z"/>
            <path fill="#c8facc" d="M690 400L750 395 740 450 670 440ZM570 660L610 650 640 760 600 750Z"/><path fill="#dff5e1" d="M500 240L540 205 570 250 560 290 520 290ZM180 210L220 190 230 280 190 270Z"/>
            <path class="water-fill" d="M0 120L50 150 140 140 180 130 210 180 200 210 140 200 140 240 120 205 70 210 40 210 60 180ZM90 720L170 770 150 795 95 770ZM0 850L120 860 140 905 0 910ZM510 680L525 675 530 730 570 750 510 745ZM800 170H820V176H800ZM905 194H935V201H905ZM1060 250L1085 270 1110 340 1090 345 1080 290ZM1085 170L1125 178 1090 184Z"/>
            <path fill="#f3ecb8" d="M520 260L555 250 540 290ZM900 280H920V310H900Z"/>
          </g>
          <g transform="translate(3120 930) scale(1.014 1)">
            <path fill="#f2efe9" d="M0 0H1560V890H0Z"/>
            <path class="resi-fill" d="M0 20L280 80 270 180 160 380 0 300ZM310 230L500 300 480 370 420 390 310 330ZM360 90L500 80 540 200 480 270 380 240Z"/>
            <path fill="#ebdbe8" d="M570 60L640 0H760L700 20 760 110 1020 150 1010 210 930 200 1000 310 900 320 700 180ZM170 450L240 440 350 600 230 710 160 540ZM480 370L640 310 700 390 690 480 750 560 720 600 720 700 640 760 510 680 380 610 410 500ZM0 640L110 740 90 800H0ZM900 320L1040 380V450L1000 460ZM1260 590L1420 510 1420 720 1380 740 1260 640ZM1460 460H1560V550L1460 500ZM1380 260L1430 250V320H1390Z"/>
            <path fill="#f2dad9" d="M750 320L790 270 1000 440 990 480 920 490 850 440 770 450 740 520 690 480 700 390 680 370ZM0 580L100 600 240 700 380 620 480 700 440 800H120L60 700 0 640ZM760 460L850 440 900 500 930 560 840 600 810 690 740 680 715 620ZM640 760L790 700 780 860H640ZM1400 360L1480 350 1510 440 1400 450Z"/>
            <path fill="#c7c7b4" d="M70 450L170 440 150 600 120 620 60 580ZM800 240L830 200 920 270 890 330ZM565 600L610 530 650 545 730 540 710 615ZM930 570L950 620 930 690 870 710 830 690 830 650ZM960 0H1040L1020 110 930 100ZM920 490L1000 460 1050 480 920 550ZM1470 100L1500 60 1530 110Z"/>
            <path class="wood-fill" d="M290 80L420 20 520 40 460 80 340 80 340 160 300 190 320 350 290 280 280 170ZM1080 370L1160 300 1290 290 1340 270 1400 320 1370 430 1280 520 1200 560 1090 510ZM1250 0H1310L1280 110 1310 200 1370 230 1310 260 1280 160ZM0 440L100 410 170 430 160 450 60 460 0 480ZM1440 520L1500 570 1560 590V640L1460 610ZM760 170L820 200 800 200ZM310 220L490 300 480 310ZM1260 540L1320 570 1310 620Z"/>
            <path fill="#e0f5bf" d="M960 600L1060 490 1120 520 1140 600 1240 640 1170 800 1060 870H950Z"/>
            <path fill="#c8facc" d="M540 100L600 80 680 160 580 170 550 210Z"/><path fill="#dff5e1" d="M1080 150H1275L1250 290 1150 290Z"/>
            <path class="pitch" d="M1085 150H1125V170H1085ZM1210 170H1250V220H1205ZM1205 230H1245V275H1200ZM535 100H555V180H540Z"/>
            <path fill="#ffd6d1" d="M0 380L100 370 60 400 0 430ZM290 410L400 500 380 550 270 540ZM1240 720L1290 700 1380 750 1360 800H1240Z"/>
            <path fill="#c9dba9" d="M850 40H950L910 110 830 90Z"/>
            <path class="school" d="M0 490L50 480 60 560 0 550ZM730 0H860L780 60Z"/>
            <path class="water-fill" d="M1000 560Q1060 530 1100 560L1080 580ZM1020 630L1045 660 1030 690ZM1070 700L1095 720 1070 760 1040 740ZM1170 600L1200 650 1180 680ZM430 480L450 500 420 510ZM340 60L390 40 380 70 320 80ZM0 100L40 130 30 160ZM1470 210L1500 215 1480 230Z"/>
          </g>
          <!-- reservoir and streams -->
          <path class="water-fill" d="M875 1168L1000 1160 1025 1180 1080 1230 1020 1215V1310L1050 1360 1060 1430 1130 1520 1140 1550 1110 1590 1080 1560 1045 1610 1080 1720 1110 1740 1180 1680 1230 1710V1821H975L950 1720 850 1700 900 1640 870 1560 885 1530 855 1460 870 1400 900 1380 885 1280 875 1240ZM570 1720L600 1695 620 1720 600 1755 570 1740ZM272 1645L295 1625 312 1640 295 1665ZM530 85L550 60 570 75 550 105ZM272 620L290 680 285 717H258L262 660ZM270 520L285 525 278 540ZM685 1678H725V1690H685ZM642 1705L725 1698V1706L642 1714ZM645 1725H668V1737H645ZM445 1275L465 1280 468 1315 455 1305Z"/>
          <g class="river">
            <path stroke-width="28" d="M1320 21Q1300 90 1345 180 1360 220 1310 270 1285 380 1240 395 1160 415 1125 410 1080 450 1110 520L1200 610Q1240 660 1190 740 1140 820 1120 815L1060 765Q1030 755 980 795 900 810 840 795H760Q700 810 710 870 740 920 800 900 900 885 960 890 1020 910 990 970L905 1065Q820 1040 690 1070 590 1080 550 1110L330 1098Q220 1080 212 1130 205 1220 230 1310 270 1470 210 1490"/>
            <path stroke-width="12" d="M1285 70Q1280 120 1300 150M1040 255L1100 300 1105 400M1435 220L1440 290M1420 720L1470 750M905 1070V1110L960 1120M1000 1020L985 1075"/>
            <g transform="translate(3120 0) scale(1.014 1)"><path stroke-width="18" d="M1550 260L1420 230 1270 208Q1240 220 1235 270 1200 310 1110 340 1080 370 1090 410 1060 530 1040 535H900Q920 600 900 680M1155 320Q1165 370 1200 400M1380 560L1500 680Q1530 710 1510 760 1490 800 1440 795 1400 810 1410 930M380 860Q480 830 495 900L450 960"/></g>
            <g transform="translate(3120 930) scale(1.014 1)"><path stroke-width="16" d="M1440 0L1390 15 1310 0Q1270 50 1300 130 1290 230 1340 280 1380 340 1350 400 1300 440 1270 520 1250 540 1200 535 1110 550 1130 610L1155 720 1090 790M380 0Q410 20 380 60L320 70M490 20L530 40 620 0"/></g>
          </g>
          <path d="M875 1150L905 1138 960 1145 985 1130 1000 1145 985 1168 880 1170Z" fill="#aaa" stroke="#555" stroke-width="7"/>
          <g class="treeicons">
            <use href="#tree" x="638" y="225"/><use href="#tree" x="825" y="738"/><use href="#tree" x="980" y="842"/><use href="#tree" x="668" y="610"/><use href="#tree" x="380" y="358"/><use href="#tree" x="842" y="1120"/><use href="#tree" x="602" y="1208"/><use href="#tree" x="590" y="1385"/><use href="#tree" x="752" y="1510"/><use href="#tree" x="590" y="1585"/><use href="#tree" x="446" y="1130"/><use href="#tree" x="280" y="1003"/><use href="#tree" x="32" y="1605"/><use href="#tree" x="225" y="1160"/><use href="#tree" x="825" y="1345"/><use href="#tree" x="632" y="1010"/><use href="#tree" x="1440" y="218"/>
            <use href="#trees" x="1270" y="160"/><use href="#trees" x="1030" y="202"/><use href="#trees" x="1163" y="307"/><use href="#trees" x="42" y="70"/><use href="#trees" x="1140" y="1565"/><use href="#trees" x="4470" y="600"/><use href="#trees" x="4622" y="790"/><use href="#trees" x="825" y="170"/><use href="#trees" x="1140" y="40"/><use href="#trees" x="4340" y="165"/>
          </g>
          <g class="tracks"><path d="M790 200L640 530M395 490L440 500 530 470M1398 40V95L1450 100 1470 30M450 450V520M490 370L455 430M730 1275L790 1310 820 1330 855 1370M870 1632L905 1640M4235 1290L4380 1265 4400 1290"/></g>
          <g class="paths"><path d="M440 745L600 750 860 700M430 765L520 765M480 740L640 545 780 210M600 670V750M640 545L850 548M2250 300L2500 400 2580 480 2640 640 2760 700M3240 90L3880 150M2590 460L2700 450M4560 705L4500 810M4250 350L4300 430 4600 720"/></g>
          <!-- roads -->
          <use href="#minor" class="road minor-c"/><use href="#minor" class="road minor-f"/>
          <use href="#tert" class="road tert-c"/><use href="#tert" class="road tert-f"/>
          <path d="M2390 21L3120 575 3560 930 4220 1420 4600 1740" stroke="#a9e5c4" stroke-width="12" fill="none" opacity=".7"/>
          <path d="M2390 21L3120 575 3560 930 4220 1420 4600 1740" stroke="#4d79dd" stroke-width="8" stroke-dasharray="8 13" fill="none"/>
          <use href="#sec" class="road sec-c"/><use href="#ramps" class="road ramp-c"/><use href="#mot" class="road mot-c"/><use href="#prim" class="road prim-c"/>
          <use href="#sec" class="road sec-f"/><use href="#prim" class="road prim-f"/><use href="#ramps" class="road ramp-f"/><use href="#mot" class="road mot-f"/>
          <path d="M4700 990L4660 1070 4700 1140Z M4692 250V330H4685Z M4692 1680V1820H4685Z" fill="#e892a2"/>
          <!-- names along roads -->
          <g class="rname">
            <text class="hy"><textPath href="#p-syc" textLength="290">Sycolin Road</textPath></text>
            <text class="hr"><textPath href="#p-dul" textLength="375">Dulles Greenway</textPath></text>
            <text class="hr"><textPath href="#p-dul2" textLength="385">Dulles Greenway</textPath></text>
            <text class="ho"><textPath href="#p-ash" textLength="505">Ashburn Farm Parkway</textPath></text>
            <text class="hy"><textPath href="#p-clai" textLength="255">Claiborne P</textPath></text>
            <text class="hy"><textPath href="#p-glo" textLength="415">Gloucester Parkway</textPath></text>
            <text class="hy"><textPath href="#p-boul" textLength="215">Boulevard</textPath></text>
            <text class="hy"><textPath href="#p-brd" textLength="500">Broadlands Boulevard</textPath></text>
            <text class="hy"><textPath href="#p-bel" textLength="450">Belmont Ridge Road</textPath></text>
            <text class="ho"><textPath href="#p-farm" textLength="320">Farmwell Road</textPath></text>
            <text class="hy"><textPath href="#p-wax" textLength="315">Waxpool Road</textPath></text>
            <text class="hy"><textPath href="#p-rus">Rus</textPath></text>
          </g>
          <g class="wname">
            <text><textPath href="#p-beav" textLength="400">Beaverdam Run</textPath></text>
            <text><textPath href="#p-broad" textLength="272">Broad Run</textPath></text>
            <text><textPath href="#p-goose" textLength="250">ose Creek</textPath></text>
          </g>
          <g class="exit"><text x="1327" y="432" transform="rotate(12 1340 410)">4</text><text x="1726" y="744" transform="rotate(10 1740 725)">4</text><text x="1922" y="854">5</text><text x="2142" y="1186">5</text><text x="2228" y="1737">6</text></g>
          <g class="place"><text class="town" x="2645" y="381" textLength="308">Ashburn</text><text x="1723" y="1299" textLength="350">Broadlands</text></g>
          <!-- route shields -->
          <g class="shield">
            <g class="s-red"><rect x="663" y="54" width="276" height="102" rx="10"/><text x="704" y="125" textLength="190">VA 267</text></g>
            <g class="s-yel"><rect x="1958" y="289" width="276" height="100" rx="10"/><text x="2001" y="361" textLength="182">SR 901</text></g>
            <g class="s-ora"><rect x="2204" y="726" width="276" height="102" rx="10"/><text x="2252" y="800" textLength="182">SR 643</text></g>
            <g class="s-ora"><rect x="1480" y="-60" width="310" height="94" rx="10"/></g>
            <g class="s-gry"><rect x="3557" y="529" width="308" height="100" rx="10"/><text x="3602" y="604" textLength="222">SR 2276</text></g>
            <g class="s-yel"><rect x="3135" y="912" width="310" height="100" rx="10"/><text x="3179" y="983" textLength="222">SR 2020</text></g>
            <g class="s-gry"><rect x="2604" y="1100" width="273" height="98" rx="10"/><text x="2644" y="1173" textLength="182">SR 641</text></g>
            <g class="s-gry"><rect x="1091" y="1353" width="308" height="98" rx="10"/><text x="1131" y="1422" textLength="220">SR 2119</text></g>
            <g class="s-gry"><rect x="1191" y="1693" width="274" height="98" rx="10"/><text x="1233" y="1767" textLength="188">SR 900</text></g>
            <g class="s-yel"><rect x="2517" y="1448" width="275" height="100" rx="10"/><text x="2561" y="1522" textLength="187">SR 640</text></g>
            <g class="s-ora"><rect x="4035" y="1140" width="276" height="103" rx="10"/><text x="4081" y="1216" textLength="185">SR 607</text></g>
            <g class="s-gry"><rect x="3418" y="1303" width="308" height="98" rx="10"/><text x="3464" y="1378" textLength="221">SR 1950</text></g>
            <g class="s-red"><rect x="4639" y="1192" width="200" height="105" rx="10"/><text x="4676" y="1265">VA</text></g>
          </g>
          <!-- location pin -->
          <path d="M2366 962L2410 890Q2450 862 2475 880 2490 905 2430 935Z" fill="#000" opacity=".45" filter="url(#soft)"/>
          <path d="M2366 966L2308 856Q2292 826 2292 803A75 75 0 0 1 2441 803Q2441 826 2426 856Z" fill="url(#pin)"/><path d="M2366 962L2311 856Q2295 826 2295 803A71 71 0 0 1 2438 803Q2438 826 2423 856Z" fill="none" stroke="#2e6c97" stroke-width="4" opacity=".5"/>
          <circle cx="2366" cy="802" r="24" fill="#fff"/>
        </svg>
        <div class="zoomctl">
          <div><svg viewBox="0 0 24 24"><path d="M12 0V24M0 12H24"/></svg></div>
          <div><svg viewBox="0 0 24 24"><path d="M0 12H24"/></svg></div>
        </div>
        <div class="attrib"><a>Report a problem</a> | © <a>OpenStreetMap</a> contributors</div>
      </div>
    </main>
    <div class="scroll"><div class="thumb"></div></div>
  </div>
</div>
</body>
</html>
```
FILE: styles.css
```css
* { box-sizing: border-box; }
body { margin: 0; background: #fff; font-family: Inter, "Liberation Sans", sans-serif; }
svg { display: block; flex: none; }
.window { width: 3024px; height: 1888px; border-radius: 22px; overflow: hidden; background: #202124; display: flex; flex-direction: column; }
.tabstrip { height: 84px; border-top: 2px solid #56575a; display: flex; align-items: flex-start; padding-left: 42px; background: #202124; }
.lights { display: flex; gap: 16px; padding-top: 29px; width: 144px; }
.lights i { width: 24px; height: 24px; border-radius: 50%; }
.red { background: #ff5f57; } .yellow { background: #febc2e; } .green { background: #28c840; }
.tab { position: relative; width: 480px; height: 68px; margin-top: 14px; background: #35363a; border-radius: 16px 16px 0 0; display: flex; align-items: center; padding: 0 23px 0 24px; color: #fff; }
.tab::before, .tab::after { content: ""; position: absolute; bottom: 0; width: 16px; height: 16px; }
.tab::before { left: -16px; background: radial-gradient(circle at 0 0, transparent 15.5px, #35363a 16px); }
.tab::after { right: -16px; background: radial-gradient(circle at 100% 0, transparent 15.5px, #35363a 16px); }
.favicon { width: 32px; height: 32px; }
.favtext { font: 700 10px Inter, sans-serif; fill: #fff; }
.tab-title { flex: 1; margin-left: 16px; font-size: 24px; font-weight: 500; letter-spacing: -.1px; }
.close { width: 18px; height: 18px; fill: none; stroke: #fff; stroke-width: 2.6; }
.plus { width: 24px; height: 24px; margin: 36px 0 0 32px; fill: none; stroke: #fff; stroke-width: 3.6; }
.chevron { width: 18px; height: 12px; margin: 43px 35px 0 auto; fill: none; stroke: #fff; stroke-width: 2.8; }
.toolbar { height: 74px; background: #35363a; border-bottom: 2px solid #5f6064; display: flex; align-items: center; padding: 0 41px 0 30px; }
.nav { width: 28px; height: 28px; margin-right: 36px; fill: none; stroke: #fff; stroke-width: 3; }
.nav.dim { stroke: #87888b; }
.nav .solid { fill: #fff; stroke: none; }
.omnibox { width: 2448px; height: 56px; margin-left: -6px; border-radius: 28px; background: #202124; display: flex; align-items: center; padding: 0 19px 0 28px; }
.lock { width: 16px; height: 22px; }
.url { flex: 1; margin-left: 24px; font-size: 28px; color: #fff; letter-spacing: -.1px; }
.star { width: 34px; height: 34px; fill: #c7c7c7; }
.panel { width: 28px; height: 28px; margin-left: 30px; fill: #f1f3f4; }
.incog { width: 200px; height: 56px; margin-left: 22px; border: 2px solid #3c4043; border-radius: 28px; background: #1f2124; display: flex; align-items: center; padding-left: 4px; color: #fff; font-size: 26px; }
.incog svg { width: 44px; height: 44px; }
.incog span { margin-left: 16px; }
.dots { width: 6px; height: 26px; margin-left: auto; fill: #fff; }
.viewport { flex: 1; display: flex; background: #202c37; }
main { flex: 1; display: flex; flex-direction: column; align-items: center; }
.scroll { width: 20px; background: #202124; }
.thumb { height: 1635px; border-radius: 10px; background: #040a10; }
h1 { margin: 106px 2px 0 0; height: 88px; line-height: 88px; font-size: 70px; font-weight: 650; letter-spacing: -2.5px; color: #fff; }
.field { width: 1092px; height: 78px; margin: 29px 12px 0 0; border-radius: 12px; background: #202124; color: #fff; font-size: 32px; line-height: 79px; padding-left: 20px; letter-spacing: -.5px; }
.actions { display: flex; gap: 20px; margin-top: 12px; }
.btn { width: 254px; height: 78px; border-radius: 12px; background: #0c1015; color: #fff; font-size: 32px; line-height: 79px; text-align: center; letter-spacing: -.8px; }
.github { width: 33px; height: 33px; margin-top: 18px; fill: #41adff; }
.info { margin: 15px 0 0; height: 40px; line-height: 40px; font-size: 32px; color: #dbdbdb; white-space: nowrap; letter-spacing: -.52px; }
.info b { font-weight: 600; }
.map { position: relative; width: 1564px; height: 604px; margin: 91px 0 0 4px; border: 2px solid #070c13; overflow: hidden; }
.canvas { width: 1560px; height: 600px; }
.wood path, .wood-fill { fill: #add19e; }
.park-fill { fill: #cdebb0; }
.resi path, .resi-fill { fill: #e0dfdf; }
.school { fill: #ffffe5; stroke: #f3efa0; stroke-width: 3; }
.pitch { fill: #aae0cb; }
.water-fill { fill: #aad3df; }
.river { fill: none; stroke: #aad3df; stroke-linecap: round; stroke-linejoin: round; }
.treeicons { fill: none; stroke: #92b985; stroke-width: 5; }
.tracks { fill: none; stroke: #c39a55; stroke-width: 4; stroke-dasharray: 18 10; opacity: .7; }
.paths { fill: none; stroke: #dcecc8; stroke-width: 5; opacity: .8; }
.road { fill: none; stroke-linejoin: round; stroke-linecap: round; }
.minor-c { stroke: #cfcdcd; stroke-width: 14; } .minor-f { stroke: #fff; stroke-width: 8.500; }
.tert-c { stroke: #bdbdbd; stroke-width: 23; } .tert-f { stroke: #fff; stroke-width: 18; }
.sec-c { stroke: #bcb87a; stroke-width: 37; } .sec-f { stroke: #f7fabf; stroke-width: 29; }
.prim-c { stroke: #c79a5b; stroke-width: 37; } .prim-f { stroke: #fcd6a4; stroke-width: 29; }
.mot-c { stroke: #d9567a; stroke-width: 52; } .mot-f { stroke: #e892a2; stroke-width: 45; }
.ramp-c { stroke: #d9567a; stroke-width: 30; } .ramp-f { stroke: #e892a2; stroke-width: 24; }
.canvas text { font-family: "Noto Sans", sans-serif; paint-order: stroke; stroke-linejoin: round; }
.rname { font-size: 51px; font-weight: 500; fill: #33332a; stroke-width: 7; }
.hy { stroke: #f7fabf; } .hr { stroke: #e892a2; } .ho { stroke: #fcd6a4; }
.wname { font-size: 60px; font-style: italic; fill: #5f9fd0; stroke: #d5e6e6; stroke-width: 5; }
.exit { font-size: 58px; fill: #b94462; stroke: #fbdfe4; stroke-width: 9; }
.place { font-size: 70px; fill: #3b3d4b; stroke: #f3f2f0; stroke-width: 8; }
.place .town { font-size: 79px; }
.shield { font-size: 60px; font-weight: 500; }
.shield rect { stroke-width: 6; }
.shield text { stroke-width: 1; }
.s-red rect { fill: #ebcdd1; stroke: #df98a6; } .s-red text { fill: #93465a; stroke: #93465a; }
.s-yel rect { fill: #f0f3d6; stroke: #c9cb9c; } .s-yel text { fill: #696a42; stroke: #696a42; }
.s-ora rect { fill: #f5e4d2; stroke: #dfb893; } .s-ora text { fill: #765b38; stroke: #765b38; }
.s-gry rect { fill: #f1f1f1; stroke: #c9c9c9; } .s-gry text { fill: #5a5b60; stroke: #5a5b60; }
.zoomctl { position: absolute; left: 20px; top: 20px; border: 4px solid rgba(0,0,0,.22); border-radius: 8px; background-clip: padding-box; }
.zoomctl div { width: 60px; height: 60px; background: #fff; display: flex; align-items: center; justify-content: center; border-radius: 0 0 4px 4px; }
.zoomctl div:first-child { height: 62px; border-bottom: 2px solid #ccc; border-radius: 4px 4px 0 0; }
.zoomctl svg { width: 24px; height: 24px; margin: 8px 0 0 1px; fill: none; stroke: #070c13; stroke-width: 4.600; }
.attrib { position: absolute; right: 0; bottom: 0; height: 34px; padding: 0 10px; background: rgba(255,255,255,.84); font: 24px/33px "Liberation Sans", Arial, sans-serif; letter-spacing: .2px; color: #333; white-space: nowrap; }
.attrib a { color: #0078a8; }
```
